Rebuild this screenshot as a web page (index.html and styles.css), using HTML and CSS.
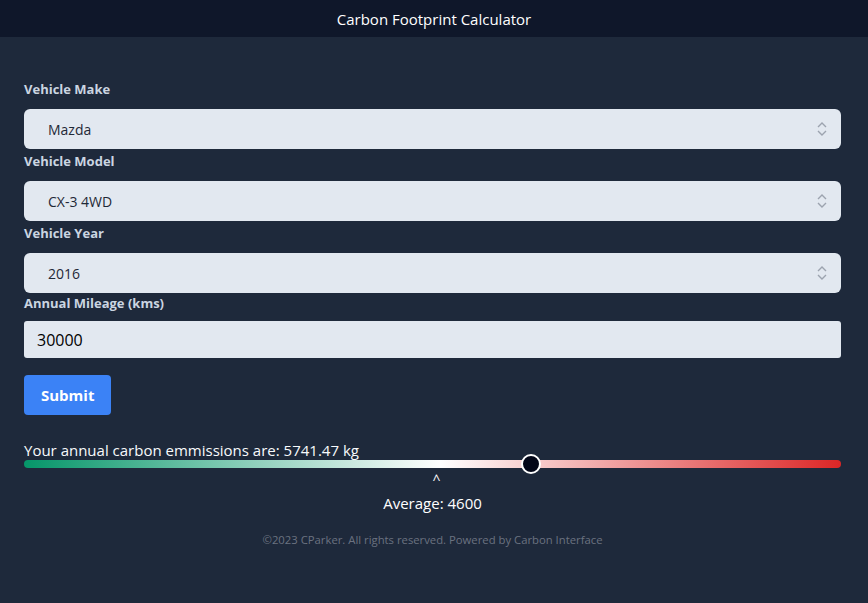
FILE: index.html
```html
<!DOCTYPE html>
<html>
<head>
<meta charset="utf-8">
<link rel="stylesheet" href="styles.css">
</head>
<body>
<header class="topbar">Carbon Footprint Calculator</header>
<main class="content">
  <form class="form">
    <label class="label">Vehicle Make</label>
    <div class="select">
      <span>Mazda</span>
      <svg class="chev" width="10" height="16" viewBox="0 0 10 16"><path d="M1 6 L5 2 L9 6 M1 10 L5 14 L9 10" fill="none" stroke="#9ca3af" stroke-width="1.4"/></svg>
    </div>
    <label class="label">Vehicle Model</label>
    <div class="select">
      <span>CX-3 4WD</span>
      <svg class="chev" width="10" height="16" viewBox="0 0 10 16"><path d="M1 6 L5 2 L9 6 M1 10 L5 14 L9 10" fill="none" stroke="#9ca3af" stroke-width="1.4"/></svg>
    </div>
    <label class="label">Vehicle Year</label>
    <div class="select">
      <span>2016</span>
      <svg class="chev" width="10" height="16" viewBox="0 0 10 16"><path d="M1 6 L5 2 L9 6 M1 10 L5 14 L9 10" fill="none" stroke="#9ca3af" stroke-width="1.4"/></svg>
    </div>
    <label class="label label-tight">Annual Mileage (kms)</label>
    <div class="input">30000</div>
    <div class="btn-row"><button type="button" class="btn">Submit</button></div>
  </form>
  <section class="result">
    <div class="result-text">Your annual carbon emmissions are: 5741.47 kg</div>
    <div class="track">
      <div class="thumb" style="left: 62.05%"></div>
    </div>
    <div class="caret">^</div>
    <div class="average">Average: 4600</div>
  </section>
  <footer class="footer">©2023 CParker. All rights reserved. Powered by Carbon Interface</footer>
</main>
</body>
</html>
```
FILE: styles.css
```css
* { box-sizing: border-box; }
html, body { margin: 0; padding: 0; }
body {
  background: #1e293b;
  font-family: "Open Sans", "Noto Sans", sans-serif;
  color: #fff;
  height: 603px;
  overflow: hidden;
}
.topbar {
  height: 37px;
  background: #0f172a;
  color: #fff;
  font-size: 15px;
  display: flex;
  align-items: center;
  justify-content: center;
}
.content {
  padding: 43px 27px 0 24px;
}
.form {
  display: flex;
  flex-direction: column;
}
.label {
  color: #cbd5e1;
  font-weight: 700;
  font-size: 13px;
  height: 18px;
  line-height: 18px;
  margin-bottom: 11px;
}
.select {
  height: 40px;
  background: #e2e8f0;
  border-radius: 6px;
  display: flex;
  align-items: center;
  justify-content: space-between;
  padding: 0 14px 0 24px;
  color: #1f2937;
  font-size: 14px;
  margin-bottom: 3px;
}
.label-tight { margin-top: -2px; margin-bottom: 9px; }
.input {
  height: 37px;
  background: #e2e8f0;
  border-radius: 3px;
  display: flex;
  align-items: center;
  padding: 0 13px;
  color: #000;
  font-size: 16px;
}
.btn-row { margin-top: 17px; }
.btn {
  background: #3b82f6;
  color: #fff;
  border: 0;
  border-radius: 4px;
  font-family: inherit;
  font-weight: 700;
  font-size: 15px;
  height: 40px;
  padding: 0 17px;
}
.result { margin-top: 25px; }
.result-text {
  font-size: 15px;
  line-height: 20px;
  color: #f8fafc;
}
.track {
  position: relative;
  height: 8px;
  border-radius: 4px;
  background: linear-gradient(to right, #059669 0%, #ffffff 51%, #dc2626 100%);
}
.thumb {
  position: absolute;
  top: 50%;
  width: 20px;
  height: 20px;
  margin-left: -10px;
  margin-top: -10px;
  border-radius: 50%;
  background: #020617;
  border: 2px solid #fff;
}
.caret {
  text-align: center;
  font-size: 14px;
  line-height: 18px;
  margin-left: 8px;
  margin-top: 3px;
}
.average {
  text-align: center;
  font-size: 15px;
  line-height: 20px;
  margin-top: 4px;
}
.footer {
  text-align: center;
  color: #6b7280;
  font-size: 11.3px;
  margin-top: 19px;
}
```
